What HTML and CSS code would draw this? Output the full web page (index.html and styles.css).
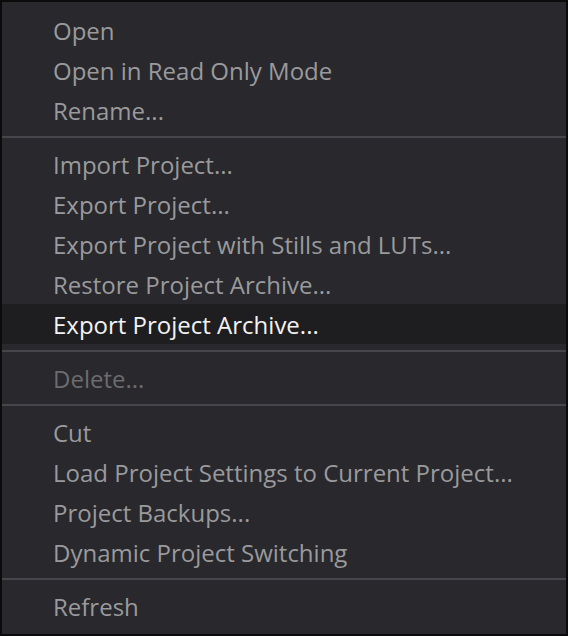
FILE: index.html
```html
<!DOCTYPE html>
<html>
<head>
<meta charset="utf-8">
<link rel="stylesheet" href="styles.css">
</head>
<body>
<div class="menu">
  <div class="item">Open</div>
  <div class="item">Open in Read Only Mode</div>
  <div class="item">Rename...</div>
  <div class="sep"></div>
  <div class="item">Import Project...</div>
  <div class="item">Export Project...</div>
  <div class="item">Export Project with Stills and LUTs...</div>
  <div class="item">Restore Project Archive...</div>
  <div class="item active">Export Project Archive...</div>
  <div class="sep"></div>
  <div class="item disabled">Delete...</div>
  <div class="sep"></div>
  <div class="item">Cut</div>
  <div class="item">Load Project Settings to Current Project...</div>
  <div class="item">Project Backups...</div>
  <div class="item">Dynamic Project Switching</div>
  <div class="sep"></div>
  <div class="item">Refresh</div>
</div>
</body>
</html>
```
FILE: styles.css
```css
html, body {
  margin: 0;
  padding: 0;
  background: #0b0b0c;
}
.menu {
  box-sizing: border-box;
  width: 568px;
  height: 636px;
  border: 2px solid #0b0b0c;
  background: #28282d;
  padding: 8px 0;
  display: flex;
  flex-direction: column;
  font-family: "Open Sans", "Noto Sans", sans-serif;
  font-size: 24px;
}
.item {
  height: 40px;
  display: flex;
  align-items: center;
  padding-left: 51px;
  color: #9a9a9c;
  white-space: nowrap;
}
.item.active {
  background: #1e1e20;
  color: #f2f2f2;
}
.item.disabled {
  color: #6c6c6e;
}
.sep {
  height: 2px;
  margin: 6px 0;
  background: #44464b;
}
```
